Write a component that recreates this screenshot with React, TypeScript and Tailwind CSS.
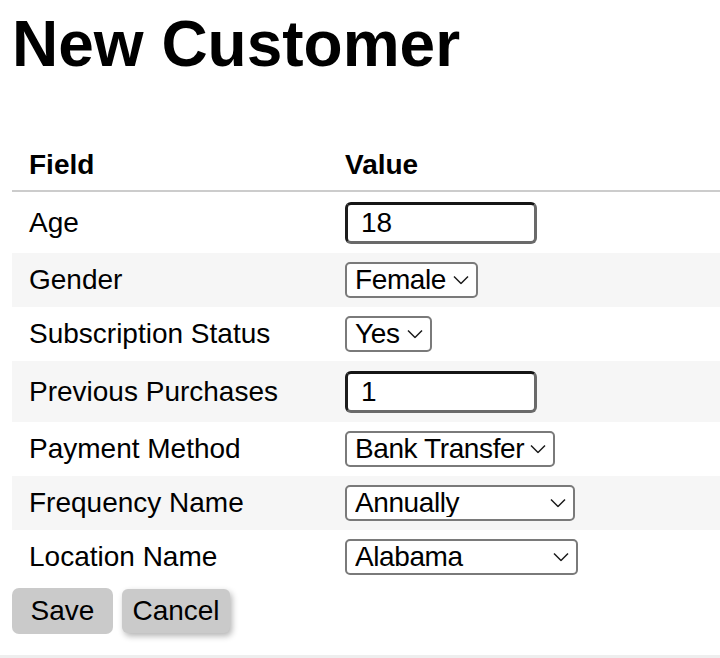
import React from "react";

type Row =
  | { label: string; kind: "input"; value: string }
  | { label: string; kind: "select"; value: string; options: string[]; width: string };

const rows: Row[] = [
  { label: "Age", kind: "input", value: "18" },
  { label: "Gender", kind: "select", value: "Female", options: ["Female", "Male"], width: "w-[133px]" },
  { label: "Subscription Status", kind: "select", value: "Yes", options: ["Yes", "No"], width: "w-[87px]" },
  { label: "Previous Purchases", kind: "input", value: "1" },
  {
    label: "Payment Method",
    kind: "select",
    value: "Bank Transfer",
    options: ["Bank Transfer", "Cash", "Credit Card", "Debit Card", "PayPal", "Venmo"],
    width: "w-[210px]",
  },
  {
    label: "Frequency Name",
    kind: "select",
    value: "Annually",
    options: ["Annually", "Bi-Weekly", "Every 3 Months", "Fortnightly", "Monthly", "Quarterly", "Weekly"],
    width: "w-[230px]",
  },
  {
    label: "Location Name",
    kind: "select",
    value: "Alabama",
    options: ["Alabama", "Alaska", "Arizona", "Arkansas", "California"],
    width: "w-[233px]",
  },
];

function Chevron() {
  return (
    <svg
      className="pointer-events-none absolute right-[9px] top-1/2 -translate-y-1/2"
      width="16"
      height="9"
      viewBox="0 0 16 9"
    >
      <path d="M1 1l7 7 7-7" fill="none" stroke="#1a1a1a" strokeWidth="1.5" />
    </svg>
  );
}

function SelectBox({ value, options, width }: { value: string; options: string[]; width: string }) {
  return (
    <div className={`relative inline-block align-middle ${width}`}>
      <select
        defaultValue={value}
        className="block h-9 w-full appearance-none rounded-[5px] border-2 border-[#7a7a7a] bg-white pl-[8px] pr-[20px] text-[28px] leading-none tracking-[-0.4px] text-black outline-none"
      >
        {options.map((o) => (
          <option key={o}>{o}</option>
        ))}
      </select>
      <Chevron />
    </div>
  );
}

function TextBox({ value }: { value: string }) {
  return (
    <input
      type="text"
      defaultValue={value}
      className="block h-[42px] w-[192px] rounded-[6px] border-[3px] border-t-[#151515] border-l-[#1c1c1c] border-r-[#6a6a6a] border-b-[#6a6a6a] bg-white pl-[13px] text-[28px] leading-none text-black outline-none"
    />
  );
}

export default function App() {
  return (
    <div className="min-h-[658px] bg-white font-['Liberation_Sans',Arial,sans-serif] text-black">
      <div className="pl-3 pt-2">
        <h1 className="mb-[57px] text-[64px] font-bold leading-[1.15]">New Customer</h1>

        <table className="w-full border-collapse text-[28px] leading-[1.15]">
          <thead>
            <tr className="border-b-2 border-[#cccccc]">
              <th className="w-[316px] px-[17px] pb-[9px] pt-[10px] text-left font-bold">Field</th>
              <th className="px-[17px] pb-[9px] pt-[10px] text-left font-bold">Value</th>
            </tr>
          </thead>
          <tbody>
            {rows.map((r, i) => {
              const pad = r.kind === "input" ? "pt-[10px] pb-[9px]" : "py-[9px]";
              return (
                <tr key={r.label} className={i % 2 === 1 ? "bg-[#f6f6f6]" : "bg-white"}>
                  <td className={`px-[17px] align-middle ${pad}`}>{r.label}</td>
                  <td className={`px-[17px] align-middle ${pad}`}>
                    {r.kind === "input" ? (
                      <TextBox value={r.value} />
                    ) : (
                      <SelectBox value={r.value} options={r.options} width={r.width} />
                    )}
                  </td>
                </tr>
              );
            })}
          </tbody>
        </table>

        <div className="mt-1 flex items-start gap-[9px]">
          <button className="h-[46px] w-[101px] rounded-[7px] bg-[#cacaca] text-[28px] text-black">
            Save
          </button>
          <button className="mt-px h-[44px] w-[108px] rounded-[6px] bg-[#cacaca] text-[28px] text-black shadow-[2px_3px_6px_rgba(0,0,0,0.3)]">
            Cancel
          </button>
        </div>
      </div>

      <div className="mt-[21px] h-[4px] w-full bg-[#eeeeee]" />
    </div>
  );
}
